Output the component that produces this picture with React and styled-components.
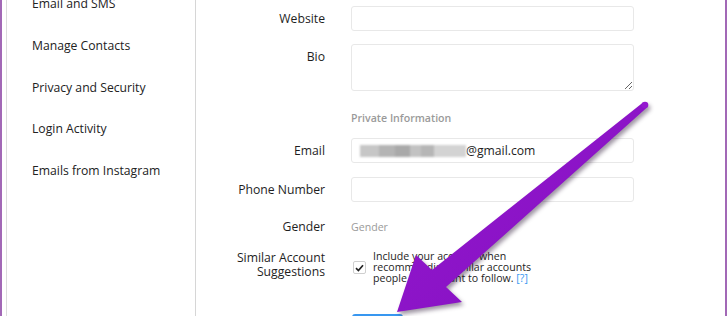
import React from 'react';
import styled, { createGlobalStyle } from 'styled-components';

const GlobalStyle = createGlobalStyle`
  html, body {
    margin: 0;
    padding: 0;
    width: 727px;
    height: 316px;
    overflow: hidden;
    background: #ffffff;
    font-family: 'Open Sans', 'Noto Sans', sans-serif;
  }
  * {
    box-sizing: border-box;
  }
`;

const Frame = styled.div`
  position: relative;
  width: 727px;
  height: 316px;
  display: flex;
  border-left: 2px solid #a268b6;
  border-right: 2px solid #a268b6;
  padding-left: 4px;
  overflow: hidden;
`;

const Card = styled.div`
  flex: 1;
  display: flex;
  border-left: 1px solid #dcdcdc;
`;

const Sidebar = styled.nav`
  width: 189px;
  flex-shrink: 0;
  border-right: 1px solid #d6d6d6;
  padding-left: 25px;
`;

const NavList = styled.ul`
  list-style: none;
  margin: -17px 0 0;
  padding: 0;
`;

const NavItem = styled.li`
  height: 41.8px;
  line-height: 41.8px;
  font-size: 12.2px;
  color: #222;
  white-space: nowrap;
`;

const Main = styled.main`
  flex: 1;
  padding-top: 6px;
`;

const Row = styled.div`
  display: grid;
  grid-template-columns: 129px 283px;
  column-gap: 26px;
  align-items: ${(props) => props.$align || 'center'};
  margin-bottom: ${(props) => props.$mb}px;
`;

const Label = styled.label`
  text-align: right;
  font-size: 12.2px;
  line-height: ${(props) => props.$lh || 18}px;
  padding-top: ${(props) => props.$pt || 0}px;
  color: #1e1e1e;
`;

const Input = styled.input`
  height: 25px;
  width: 100%;
  border: 1px solid #e8e8e8;
  border-radius: 3px;
  background: #fff;
  padding: 0 9px;
  font-family: inherit;
  font-size: 12.2px;
  color: #262626;
`;

const TextArea = styled.textarea`
  height: 47px;
  width: 100%;
  border: 1px solid #e8e8e8;
  border-radius: 3px;
  background: #fff;
  padding: 4px 9px;
  font-family: inherit;
  display: block;
`;

const EmailField = styled.div`
  height: 25px;
  width: 100%;
  border: 1px solid #e8e8e8;
  border-radius: 3px;
  background: #fff;
  padding-left: 8px;
  display: flex;
  align-items: center;
  font-size: 12.2px;
  color: #1e1e1e;
`;

const Redacted = styled.span`
  display: inline-block;
  width: 106px;
  height: 12px;
  filter: blur(1.2px);
  background: linear-gradient(
    to right,
    #c6c6c6 0 18%,
    #b4b4b4 18% 33%,
    #a9a9a9 33% 47%,
    #c2c2c2 47% 58%,
    #b6b6b6 58% 70%,
    #d3d3d3 70% 100%
  );
`;

const Muted = styled.div`
  grid-column: ${(props) => props.$col || 'auto'};
  font-size: ${(props) => props.$size}px;
  font-weight: ${(props) => props.$weight || 400};
  line-height: 20px;
  color: #9a9a9a;
`;

const CheckWrap = styled.div`
  display: flex;
  align-items: center;
  gap: 7px;
  padding-left: 2px;
`;

const CheckBox = styled.span`
  width: 13px;
  height: 13px;
  flex-shrink: 0;
  border: 1px solid #cfcfcf;
  border-radius: 2px;
  background: #fff;
  display: flex;
  align-items: center;
  justify-content: center;
`;

const CheckText = styled.p`
  margin: 0;
  max-width: 172px;
  font-size: 10.6px;
  line-height: 11px;
  color: #1e1e1e;
`;

const HelpLink = styled.a`
  color: #3897f0;
  text-decoration: none;
`;

const Submit = styled.button`
  grid-column: 2;
  justify-self: start;
  width: 51px;
  height: 30px;
  margin-left: 1px;
  border: none;
  border-radius: 3px;
  background: #3897f0;
  color: #fff;
  font-family: inherit;
  font-size: 12px;
`;

const ArrowLayer = styled.svg`
  position: absolute;
  left: -2px;
  top: 0;
  width: 727px;
  height: 316px;
  pointer-events: none;
  filter: drop-shadow(2px 3px 2px rgba(40, 20, 50, 0.45));
`;

const navItems = [
  'Email and SMS',
  'Manage Contacts',
  'Privacy and Security',
  'Login Activity',
  'Emails from Instagram',
];

const Arrow = () => (
  <ArrowLayer viewBox='0 0 727 316'>
    <defs>
      <linearGradient id='arrowFill' x1='0' y1='0' x2='1' y2='1'>
        <stop offset='0' stopColor='#9418cf' />
        <stop offset='1' stopColor='#8410c0' />
      </linearGradient>
    </defs>
    <polygon
      points='643,102.5 432,270 416,255 397,312 462,302 446,287 647,107.5'
      fill='url(#arrowFill)'
    />
    <circle cx='645' cy='105' r='3.3' fill='#9418cf' />
  </ArrowLayer>
);

export default function App() {
  return (
    <>
      <GlobalStyle />
      <Frame>
        <Card>
          <Sidebar>
            <NavList>
              {navItems.map((item) => (
                <NavItem key={item}>{item}</NavItem>
              ))}
            </NavList>
          </Sidebar>
          <Main>
            <Row $mb={13}>
              <Label>Website</Label>
              <Input type='text' />
            </Row>
            <Row $mb={17} $align='start'>
              <Label $pt={4}>Bio</Label>
              <TextArea />
            </Row>
            <Row $mb={10}>
              <Muted $col={2} $size={10.6} $weight={600}>
                Private Information
              </Muted>
            </Row>
            <Row $mb={14}>
              <Label>Email</Label>
              <EmailField>
                <Redacted />
                <span>@gmail.com</span>
              </EmailField>
            </Row>
            <Row $mb={15}>
              <Label>Phone Number</Label>
              <Input type='text' />
            </Row>
            <Row $mb={14}>
              <Label>Gender</Label>
              <Muted $size={10.6}>Gender</Muted>
            </Row>
            <Row $mb={30} $align='start'>
              <Label $lh={14}>Similar Account Suggestions</Label>
              <CheckWrap>
                <CheckBox>
                  <svg width='9' height='8' viewBox='0 0 9 8'>
                    <path
                      d='M1 4.2 L3.4 6.5 L8 1.2'
                      fill='none'
                      stroke='#222'
                      strokeWidth='1.7'
                    />
                  </svg>
                </CheckBox>
                <CheckText>
                  Include your account when recommending similar accounts
                  people might want to follow. <HelpLink href='#'>[?]</HelpLink>
                </CheckText>
              </CheckWrap>
            </Row>
            <Row $mb={0}>
              <Submit>Submit</Submit>
            </Row>
          </Main>
        </Card>
        <Arrow />
      </Frame>
    </>
  );
}
